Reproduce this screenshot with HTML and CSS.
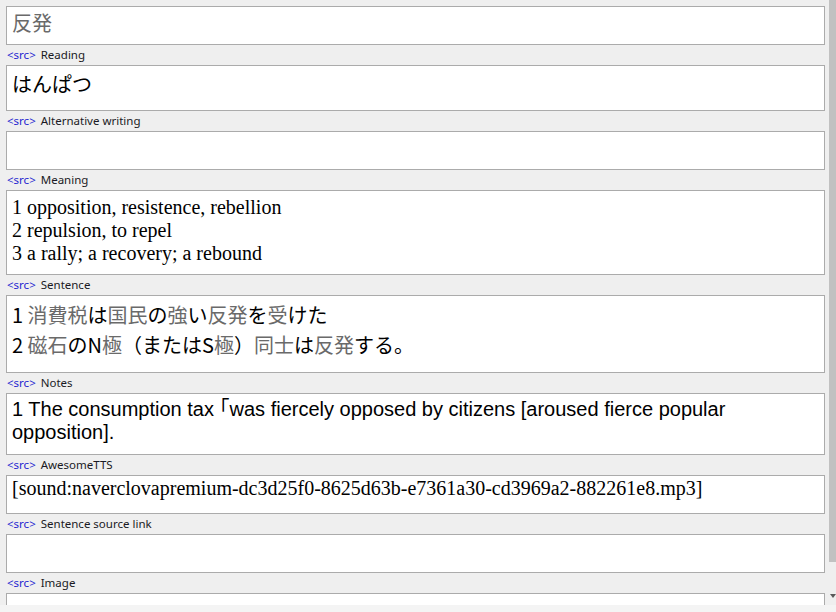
FILE: index.html
```html
<!DOCTYPE html>
<html lang="ja">
<head>
<meta charset="utf-8">
<title>Editor</title>
<link rel="stylesheet" href="styles.css">
</head>
<body>
<div class="window">
  <div class="editor">
    <div class="fields">
      <div class="field f-term jp"><span class="k">反発</span></div>

      <div class="label"><span class="src">&lt;src&gt;</span><span class="name">Reading</span></div>
      <div class="field f-reading jp">はんぱつ</div>

      <div class="label"><span class="src">&lt;src&gt;</span><span class="name">Alternative writing</span></div>
      <div class="field f-empty"></div>

      <div class="label"><span class="src">&lt;src&gt;</span><span class="name">Meaning</span></div>
      <div class="field f-meaning serif">
        <div>1 opposition, resistence, rebellion</div>
        <div>2 repulsion, to repel</div>
        <div>3 a rally; a recovery; a rebound</div>
      </div>

      <div class="label"><span class="src">&lt;src&gt;</span><span class="name">Sentence</span></div>
      <div class="field f-sentence jp">
        <div>1 <span class="k">消費税</span>は<span class="k">国民</span>の<span class="k">強</span>い<span class="k">反発</span>を<span class="k">受</span>けた</div>
        <div>2 <span class="k">磁石</span>のN<span class="k">極</span>（またはS<span class="k">極</span>）<span class="k">同士</span>は<span class="k">反発</span>する。</div>
      </div>

      <div class="label"><span class="src">&lt;src&gt;</span><span class="name">Notes</span></div>
      <div class="field f-notes sans">1 The consumption tax 「was fiercely opposed by citizens [aroused fierce popular opposition].</div>

      <div class="label"><span class="src">&lt;src&gt;</span><span class="name">AwesomeTTS</span></div>
      <div class="field f-tts serif">[sound:naverclovapremium-dc3d25f0-8625d63b-e7361a30-cd3969a2-882261e8.mp3]</div>

      <div class="label"><span class="src">&lt;src&gt;</span><span class="name">Sentence source link</span></div>
      <div class="field f-empty"></div>

      <div class="label"><span class="src">&lt;src&gt;</span><span class="name">Image</span></div>
      <div class="field f-empty"></div>
    </div>
    <div class="scrollbar">
      <div class="thumb"></div>
      <div class="track"><span class="arrow"></span></div>
    </div>
  </div>
  <div class="status"></div>
</div>
</body>
</html>
```

FILE: styles.css
```css
html, body {
  margin: 0;
  padding: 0;
  background: #f0f0f0;
  font-family: "Noto Sans", sans-serif;
}

.window {
  width: 836px;
  height: 612px;
  display: flex;
  flex-direction: column;
  overflow: hidden;
}

.editor {
  height: 605px;
  display: flex;
  background: #efefef;
  overflow: hidden;
}

.fields {
  flex: 1;
  padding: 6px 4px 0 6px;
  overflow: hidden;
}

.field {
  box-sizing: border-box;
  background: #ffffff;
  border: 1px solid #ababab;
  padding: 0 5px;
  color: #000000;
  font-size: 20px;
  overflow: hidden;
}

.jp {
  font-family: "Noto Sans CJK JP", sans-serif;
  line-height: 29px;
}

.serif {
  font-family: "Liberation Serif", "Noto Sans CJK JP", serif;
  line-height: 23px;
}

.sans {
  font-family: "Liberation Sans", "Noto Sans CJK JP", sans-serif;
  line-height: 23px;
}

.k {
  color: #6a6a6a;
}

.f-term {
  height: 39px;
  padding-top: 1px;
}

.f-reading {
  height: 46px;
  padding-top: 3px;
}

.f-empty {
  height: 39px;
}

.f-meaning {
  height: 85px;
  padding-top: 5px;
}

.f-sentence {
  height: 78px;
  padding-top: 4px;
  line-height: 30px;
}

.f-notes {
  height: 62px;
  padding-top: 4px;
  font-feature-settings: "halt" 1;
}

.f-tts {
  height: 39px;
  padding-top: 1px;
  white-space: nowrap;
}

.label {
  height: 20px;
  display: flex;
  align-items: center;
  gap: 5px;
  padding-left: 1px;
  font-size: 11.5px;
  line-height: 20px;
}

.src {
  color: #2525cf;
}

.name {
  color: #1a1a24;
}

.scrollbar {
  width: 7px;
  display: flex;
  flex-direction: column;
}

.thumb {
  height: 562px;
  background: #c1c1c1;
}

.track {
  flex: 1;
  display: flex;
  align-items: flex-end;
  justify-content: center;
  padding-bottom: 7px;
}

.arrow {
  width: 0;
  height: 0;
  border-left: 3px solid transparent;
  border-right: 3px solid transparent;
  border-top: 4px solid #5a5a5a;
}

.status {
  flex: 1;
  background: #f4f4f4;
}
```
